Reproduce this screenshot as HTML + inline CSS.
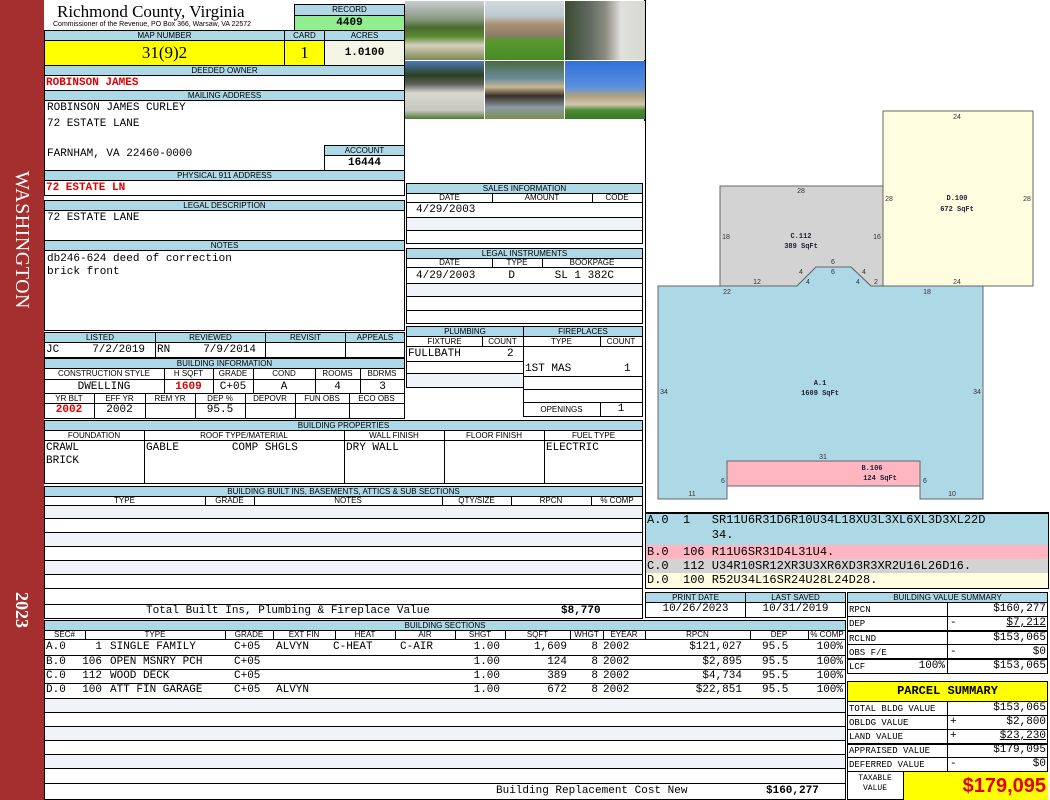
<!DOCTYPE html>
<html><head><meta charset="utf-8"><style>
*{margin:0;padding:0;box-sizing:border-box}
body{width:1050px;height:800px;position:relative;background:#fff;overflow:hidden;font-family:"Liberation Mono",monospace;color:#000}
div{position:absolute}
.h{background:#add8e6;border:1px solid #000;font:8px/9px "Liberation Sans",sans-serif;text-align:center;white-space:nowrap;overflow:hidden}
.s{font:8px/9px "Liberation Sans",sans-serif;text-align:center;border-right:1px solid #000;border-bottom:1px solid #000;white-space:nowrap;overflow:hidden}
.m{font:11px/13px "Liberation Mono",monospace;white-space:pre}
.bx{border:1px solid #000}
.l{border-top:1px solid #000;height:0}
.v{border-left:1px solid #000;width:0}
.r{text-align:right}
.red{color:#e00000;font-weight:bold}
.alt{background:#f0f4f8}
.row div{font:11px/13px "Liberation Mono",monospace;white-space:pre;top:0}
.row div.rr{text-align:right}
</style></head><body>
<!-- sidebar -->
<div style="left:0;top:0;width:44px;height:800px;background:#a52e2e"></div>
<div style="left:22px;top:240px;width:0;height:0"><div style="left:-90px;top:-12px;width:180px;height:24px;transform:rotate(90deg);color:#fff;font:20px/24px 'Liberation Serif',serif;text-align:center;letter-spacing:0.5px">WASHINGTON</div></div>
<div style="left:22px;top:610px;width:0;height:0"><div style="left:-30px;top:-12px;width:60px;height:24px;transform:rotate(90deg);color:#fff;font:bold 18px/24px 'Liberation Serif',serif;text-align:center">2023</div></div>

<!-- header -->
<div style="left:57px;top:2px;font:17px/20px 'Liberation Serif',serif">Richmond County, Virginia</div>
<div style="left:53px;top:21px;font:7px/8px 'Liberation Sans',sans-serif">Commissioner of the Revenue, PO Box 366, Warsaw, VA 22572</div>
<div class="h" style="left:294px;top:4px;width:111px;height:12px">RECORD</div>
<div class="bx m" style="left:294px;top:15px;width:111px;height:16px;background:#90ee90;text-align:center;font-weight:bold;line-height:14px">4409</div>
<div class="h" style="left:44px;top:30px;width:241px;height:11px">MAP NUMBER</div>
<div class="h" style="left:284px;top:30px;width:41px;height:11px">CARD</div>
<div class="h" style="left:324px;top:30px;width:81px;height:11px">ACRES</div>
<div class="bx" style="left:44px;top:40px;width:241px;height:26px;background:#ffff00;font:17px/24px 'Liberation Serif',serif;text-align:center">31(9)2</div>
<div class="bx" style="left:284px;top:40px;width:41px;height:26px;background:#ffff00;font:17px/24px 'Liberation Serif',serif;text-align:center">1</div>
<div class="bx m" style="left:324px;top:40px;width:81px;height:26px;background:#f5f5e6;text-align:center;font-weight:bold;line-height:24px">1.0100</div>
<div class="h" style="left:44px;top:65px;width:361px;height:11px">DEEDED OWNER</div>
<div class="m red" style="left:46px;top:77px">ROBINSON JAMES</div>
<div class="h" style="left:44px;top:90px;width:361px;height:11px">MAILING ADDRESS</div>
<div class="m" style="left:47px;top:102px">ROBINSON JAMES CURLEY</div>
<div class="m" style="left:47px;top:118px">72 ESTATE LANE</div>
<div class="m" style="left:47px;top:148px">FARNHAM, VA 22460-0000</div>
<div class="h" style="left:324px;top:145px;width:81px;height:11px">ACCOUNT</div>
<div class="bx m" style="left:324px;top:155px;width:81px;height:16px;text-align:center;font-weight:bold;line-height:14px">16444</div>
<div class="h" style="left:44px;top:170px;width:361px;height:11px">PHYSICAL 911 ADDRESS</div>
<div class="m red" style="left:46px;top:182px">72 ESTATE LN</div>
<div style="left:44px;top:65px;width:361px;height:131px;border-left:1px solid #000;border-right:1px solid #000;border-bottom:1px solid #000"></div>
<div class="bx" style="left:44px;top:200px;width:361px;height:41px"></div>
<div class="h" style="left:44px;top:200px;width:361px;height:11px">LEGAL DESCRIPTION</div>
<div class="m" style="left:47px;top:212px">72 ESTATE LANE</div>
<div class="bx" style="left:44px;top:240px;width:361px;height:91px"></div>
<div class="h" style="left:44px;top:240px;width:361px;height:11px">NOTES</div>
<div class="m" style="left:47px;top:253px">db246-624 deed of correction
brick front</div>

<!-- listed -->
<div class="bx" style="left:44px;top:332px;width:361px;height:26px"></div>
<div class="h" style="left:44px;top:332px;width:112px;height:11px">LISTED</div>
<div class="h" style="left:155px;top:332px;width:111px;height:11px">REVIEWED</div>
<div class="h" style="left:265px;top:332px;width:81px;height:11px">REVISIT</div>
<div class="h" style="left:345px;top:332px;width:60px;height:11px">APPEALS</div>
<div class="v" style="left:155px;top:342px;height:15px"></div><div class="v" style="left:265px;top:342px;height:15px"></div><div class="v" style="left:345px;top:342px;height:15px"></div>
<div class="m" style="left:46px;top:344px">JC     7/2/2019</div>
<div class="m" style="left:157px;top:344px">RN     7/9/2014</div>

<!-- building info -->
<div class="bx" style="left:44px;top:358px;width:361px;height:61px"></div>
<div class="h" style="left:44px;top:358px;width:361px;height:11px">BUILDING INFORMATION</div>
<div class="s" style="left:44px;top:369px;width:121px;height:11px">CONSTRUCTION STYLE</div>
<div class="s" style="left:164px;top:369px;width:50px;height:11px">H SQFT</div>
<div class="s" style="left:213px;top:369px;width:41px;height:11px">GRADE</div>
<div class="s" style="left:253px;top:369px;width:63px;height:11px">COND</div>
<div class="s" style="left:315px;top:369px;width:46px;height:11px">ROOMS</div>
<div class="s" style="left:360px;top:369px;width:45px;height:11px">BDRMS</div>
<div class="v" style="left:164px;top:380px;height:13px"></div><div class="v" style="left:213px;top:380px;height:13px"></div><div class="v" style="left:253px;top:380px;height:13px"></div><div class="v" style="left:315px;top:380px;height:13px"></div><div class="v" style="left:360px;top:380px;height:13px"></div>
<div class="l" style="left:44px;top:393px;width:361px"></div>
<div class="m" style="left:44px;top:381px;width:120px;text-align:center">DWELLING</div>
<div class="m red" style="left:164px;top:381px;width:49px;text-align:center">1609</div>
<div class="m" style="left:213px;top:381px;width:40px;text-align:center">C+05</div>
<div class="m" style="left:253px;top:381px;width:62px;text-align:center">A</div>
<div class="m" style="left:315px;top:381px;width:45px;text-align:center">4</div>
<div class="m" style="left:360px;top:381px;width:45px;text-align:center">3</div>
<div class="s" style="left:44px;top:394px;width:51px;height:10px;line-height:9px">YR BLT</div>
<div class="s" style="left:94px;top:394px;width:52px;height:10px">EFF YR</div>
<div class="s" style="left:145px;top:394px;width:51px;height:10px">REM YR</div>
<div class="s" style="left:195px;top:394px;width:51px;height:10px">DEP %</div>
<div class="s" style="left:245px;top:394px;width:51px;height:10px">DEPOVR</div>
<div class="s" style="left:295px;top:394px;width:55px;height:10px">FUN OBS</div>
<div class="s" style="left:349px;top:394px;width:56px;height:10px">ECO OBS</div>
<div class="v" style="left:94px;top:404px;height:14px"></div><div class="v" style="left:145px;top:404px;height:14px"></div><div class="v" style="left:195px;top:404px;height:14px"></div><div class="v" style="left:245px;top:404px;height:14px"></div><div class="v" style="left:295px;top:404px;height:14px"></div><div class="v" style="left:349px;top:404px;height:14px"></div>
<div class="m red" style="left:44px;top:404px;width:50px;text-align:center">2002</div>
<div class="m" style="left:94px;top:404px;width:51px;text-align:center">2002</div>
<div class="m" style="left:195px;top:404px;width:50px;text-align:center">95.5</div>

<!-- photos -->
<div style="left:405px;top:0;width:240px;height:121px;border-right:1px solid #000">
<div style="left:0;top:1px;width:79px;height:59px;background:linear-gradient(#c8ccd2 0,#8a9a80 30%,#4a6a30 45%,#5a8a30 60%,#d8d0c0 75%,#7a8a50 100%)"></div>
<div style="left:80px;top:1px;width:79px;height:59px;background:linear-gradient(#d0d8e0 0,#c0c8d0 25%,#a89070 40%,#8a7a68 60%,#5a9a30 65%,#4a8a28 100%)"></div>
<div style="left:160px;top:1px;width:80px;height:59px;background:linear-gradient(90deg,#3a4a30 0,#606a60 30%,#8a8a80 50%,#e0e0dc 70%,#d8d8d0 100%)"></div>
<div style="left:0;top:61px;width:79px;height:58px;background:linear-gradient(#4a7ab8 0,#2a4020 25%,#606060 40%,#d8d8d0 55%,#c8c8c0 85%,#4a7a30 100%)"></div>
<div style="left:80px;top:61px;width:79px;height:58px;background:linear-gradient(#4a6a40 0,#6a8a9a 30%,#c8b890 45%,#3a3028 60%,#8a9aa0 80%,#7a9050 100%)"></div>
<div style="left:160px;top:61px;width:80px;height:58px;background:linear-gradient(#3070d8 0,#5a90e0 45%,#b0a080 60%,#d0c8b0 75%,#4a8a30 85%,#3a7a28 100%)"></div>
</div>

<!-- sales -->
<div class="bx" style="left:406px;top:183px;width:237px;height:61px"></div>
<div class="h" style="left:406px;top:183px;width:237px;height:11px">SALES INFORMATION</div>
<div class="s" style="left:406px;top:193px;width:87px;height:10px;border-left:1px solid #000">DATE</div>
<div class="s" style="left:492px;top:193px;width:101px;height:10px">AMOUNT</div>
<div class="s" style="left:592px;top:193px;width:51px;height:10px">CODE</div>
<div class="m" style="left:416px;top:204px">4/29/2003</div>
<div class="l" style="left:406px;top:217px;width:237px"></div>
<div class="alt" style="left:407px;top:218px;width:235px;height:12px"></div>
<div class="l" style="left:406px;top:230px;width:237px"></div>
<div class="bx" style="left:406px;top:248px;width:237px;height:76px"></div>
<div class="h" style="left:406px;top:248px;width:237px;height:11px">LEGAL INSTRUMENTS</div>
<div class="s" style="left:406px;top:258px;width:87px;height:10px;border-left:1px solid #000">DATE</div>
<div class="s" style="left:492px;top:258px;width:51px;height:10px">TYPE</div>
<div class="s" style="left:542px;top:258px;width:101px;height:10px">BOOKPAGE</div>
<div class="m" style="left:416px;top:270px">4/29/2003     D      SL 1 382C</div>
<div class="l" style="left:406px;top:283px;width:237px"></div>
<div class="alt" style="left:407px;top:284px;width:235px;height:12px"></div>
<div class="l" style="left:406px;top:296px;width:237px"></div>
<div class="l" style="left:406px;top:310px;width:237px"></div>

<!-- plumbing -->
<div class="h" style="left:406px;top:326px;width:118px;height:11px">PLUMBING</div>
<div class="h" style="left:523px;top:326px;width:120px;height:11px">FIREPLACES</div>
<div class="s" style="left:406px;top:337px;width:77px;height:10px;border-left:1px solid #000">FIXTURE</div>
<div class="s" style="left:482px;top:337px;width:42px;height:10px">COUNT</div>
<div class="s" style="left:523px;top:337px;width:78px;height:10px">TYPE</div>
<div class="s" style="left:600px;top:337px;width:43px;height:10px">COUNT</div>
<div class="m" style="left:408px;top:348px">FULLBATH       2</div>
<div class="v" style="left:523px;top:347px;height:70px"></div><div class="v" style="left:642px;top:347px;height:70px"></div><div class="v" style="left:406px;top:347px;height:40px"></div>
<div class="l" style="left:406px;top:361px;width:118px"></div>
<div class="m" style="left:525px;top:363px">1ST MAS        1</div>
<div class="l" style="left:523px;top:376px;width:120px"></div>
<div class="l" style="left:406px;top:373px;width:118px"></div>
<div class="alt" style="left:407px;top:374px;width:116px;height:13px"></div>
<div class="l" style="left:406px;top:387px;width:118px"></div>
<div class="l" style="left:523px;top:389px;width:120px"></div>
<div class="l" style="left:523px;top:402px;width:120px"></div>
<div class="l" style="left:523px;top:416px;width:120px"></div>
<div class="v" style="left:600px;top:402px;height:14px"></div>
<div style="left:523px;top:405px;width:77px;font:8px/9px 'Liberation Sans',sans-serif;text-align:center">OPENINGS</div>
<div class="m" style="left:600px;top:403px;width:42px;text-align:center">1</div>

<!-- building properties -->
<div class="bx" style="left:44px;top:420px;width:599px;height:64px"></div>
<div class="h" style="left:44px;top:420px;width:599px;height:11px">BUILDING PROPERTIES</div>
<div class="s" style="left:44px;top:431px;width:101px;height:10px">FOUNDATION</div>
<div class="s" style="left:144px;top:431px;width:201px;height:10px">ROOF TYPE/MATERIAL</div>
<div class="s" style="left:344px;top:431px;width:101px;height:10px">WALL FINISH</div>
<div class="s" style="left:444px;top:431px;width:101px;height:10px">FLOOR FINISH</div>
<div class="s" style="left:544px;top:431px;width:99px;height:10px;border-right:0">FUEL TYPE</div>
<div class="v" style="left:144px;top:441px;height:42px"></div><div class="v" style="left:344px;top:441px;height:42px"></div><div class="v" style="left:444px;top:441px;height:42px"></div><div class="v" style="left:544px;top:441px;height:42px"></div>
<div class="m" style="left:46px;top:442px">CRAWL
BRICK</div>
<div class="m" style="left:146px;top:442px">GABLE        COMP SHGLS</div>
<div class="m" style="left:346px;top:442px">DRY WALL</div>
<div class="m" style="left:546px;top:442px">ELECTRIC</div>

<!-- built ins -->
<div class="bx" style="left:44px;top:486px;width:599px;height:133px"></div>
<div class="h" style="left:44px;top:486px;width:599px;height:11px">BUILDING BUILT INS, BASEMENTS, ATTICS &amp; SUB SECTIONS</div>
<div class="s" style="left:44px;top:496px;width:162px;height:10px">TYPE</div>
<div class="s" style="left:205px;top:496px;width:50px;height:10px">GRADE</div>
<div class="s" style="left:254px;top:496px;width:189px;height:10px">NOTES</div>
<div class="s" style="left:442px;top:496px;width:70px;height:10px">QTY/SIZE</div>
<div class="s" style="left:511px;top:496px;width:81px;height:10px">RPCN</div>
<div class="s" style="left:591px;top:496px;width:52px;height:10px;border-right:0">% COMP</div>
<div class="alt" style="left:45px;top:506px;width:597px;height:12px"></div>
<div class="l" style="left:44px;top:518px;width:599px"></div>
<div class="l" style="left:44px;top:532px;width:599px"></div>
<div class="alt" style="left:45px;top:533px;width:597px;height:13px"></div>
<div class="l" style="left:44px;top:546px;width:599px"></div>
<div class="l" style="left:44px;top:560px;width:599px"></div>
<div class="alt" style="left:45px;top:561px;width:597px;height:13px"></div>
<div class="l" style="left:44px;top:574px;width:599px"></div>
<div class="l" style="left:44px;top:588px;width:599px"></div>
<div class="l" style="left:44px;top:604px;width:599px"></div>
<div class="m" style="left:146px;top:605px">Total Built Ins, Plumbing &amp; Fireplace Value</div>
<div class="m" style="left:561px;top:605px;font-weight:bold">$8,770</div>

<!-- building sections -->
<div class="bx" style="left:44px;top:620px;width:802px;height:180px"></div>
<div class="h" style="left:44px;top:620px;width:802px;height:11px">BUILDING SECTIONS</div>
<div class="s" style="left:44px;top:630px;width:42px;height:10px">SEC#</div>
<div class="s" style="left:85px;top:630px;width:141px;height:10px">TYPE</div>
<div class="s" style="left:225px;top:630px;width:49px;height:10px">GRADE</div>
<div class="s" style="left:273px;top:630px;width:63px;height:10px">EXT FIN</div>
<div class="s" style="left:335px;top:630px;width:61px;height:10px">HEAT</div>
<div class="s" style="left:395px;top:630px;width:61px;height:10px">AIR</div>
<div class="s" style="left:455px;top:630px;width:51px;height:10px">SHGT</div>
<div class="s" style="left:505px;top:630px;width:66px;height:10px">SQFT</div>
<div class="s" style="left:570px;top:630px;width:34px;height:10px">WHGT</div>
<div class="s" style="left:603px;top:630px;width:43px;height:10px">EYEAR</div>
<div class="s" style="left:645px;top:630px;width:106px;height:10px">RPCN</div>
<div class="s" style="left:750px;top:630px;width:59px;height:10px">DEP</div>
<div class="s" style="left:808px;top:630px;width:38px;height:10px;border-right:0">% COMP</div>

<div class="row" style="left:0;top:641px;width:1050px;height:13px">
<div style="left:46px">A.0</div><div class="rr" style="left:70px;width:32px">1</div><div style="left:110px">SINGLE FAMILY</div><div style="left:234px">C+05</div><div style="left:276px">ALVYN</div><div style="left:333px">C-HEAT</div><div style="left:400px">C-AIR</div><div class="rr" style="left:440px;width:60px">1.00</div><div class="rr" style="left:500px;width:67px">1,609</div><div class="rr" style="left:570px;width:28px">8</div><div style="left:603px">2002</div><div class="rr" style="left:650px;width:92px">$121,027</div><div style="left:762px">95.5</div><div class="rr" style="left:800px;width:43px">100%</div>
</div>
<div class="row" style="left:0;top:656px;width:1050px;height:13px">
<div style="left:46px">B.0</div><div class="rr" style="left:70px;width:32px">106</div><div style="left:110px">OPEN MSNRY PCH</div><div style="left:234px">C+05</div><div class="rr" style="left:440px;width:60px">1.00</div><div class="rr" style="left:500px;width:67px">124</div><div class="rr" style="left:570px;width:28px">8</div><div style="left:603px">2002</div><div class="rr" style="left:650px;width:92px">$2,895</div><div style="left:762px">95.5</div><div class="rr" style="left:800px;width:43px">100%</div>
</div>
<div class="row" style="left:0;top:670px;width:1050px;height:13px">
<div style="left:46px">C.0</div><div class="rr" style="left:70px;width:32px">112</div><div style="left:110px">WOOD DECK</div><div style="left:234px">C+05</div><div class="rr" style="left:440px;width:60px">1.00</div><div class="rr" style="left:500px;width:67px">389</div><div class="rr" style="left:570px;width:28px">8</div><div style="left:603px">2002</div><div class="rr" style="left:650px;width:92px">$4,734</div><div style="left:762px">95.5</div><div class="rr" style="left:800px;width:43px">100%</div>
</div>
<div class="row" style="left:0;top:684px;width:1050px;height:13px">
<div style="left:46px">D.0</div><div class="rr" style="left:70px;width:32px">100</div><div style="left:110px">ATT FIN GARAGE</div><div style="left:234px">C+05</div><div style="left:276px">ALVYN</div><div class="rr" style="left:440px;width:60px">1.00</div><div class="rr" style="left:500px;width:67px">672</div><div class="rr" style="left:570px;width:28px">8</div><div style="left:603px">2002</div><div class="rr" style="left:650px;width:92px">$22,851</div><div style="left:762px">95.5</div><div class="rr" style="left:800px;width:43px">100%</div>
</div>
<div class="l" style="left:44px;top:655px;width:802px"></div>
<div class="l" style="left:44px;top:669px;width:802px"></div>
<div class="l" style="left:44px;top:683px;width:802px"></div>
<div class="l" style="left:44px;top:698px;width:802px"></div>
<div class="alt" style="left:45px;top:699px;width:800px;height:13px"></div>
<div class="l" style="left:44px;top:712px;width:802px"></div>
<div class="l" style="left:44px;top:726px;width:802px"></div>
<div class="alt" style="left:45px;top:727px;width:800px;height:13px"></div>
<div class="l" style="left:44px;top:740px;width:802px"></div>
<div class="l" style="left:44px;top:754px;width:802px"></div>
<div class="alt" style="left:45px;top:755px;width:800px;height:13px"></div>
<div class="l" style="left:44px;top:768px;width:802px"></div>
<div class="l" style="left:44px;top:783px;width:802px"></div>
<div class="m" style="left:496px;top:785px">Building Replacement Cost New</div>
<div class="m" style="left:766px;top:785px;font-weight:bold">$160,277</div>

<!-- sketch -->
<div style="left:645px;top:0;width:404px;height:513px;border-left:1px solid #000;border-bottom:1px solid #000"></div>
<svg style="position:absolute;left:0;top:0" width="1050" height="512" font-family="Liberation Sans,sans-serif" font-size="7">
<polygon points="720,186 883,186 883,286 871,286 851,267 816,267 797,286 720,286" fill="#d3d3d3" stroke="#666" stroke-width="1"/>
<polygon points="883,111 1033,111 1033,286 883,286" fill="#fffde0" stroke="#666"/>
<polygon points="658,286 797,286 816,267 851,267 871,286 983,286 983,499 920,499 920,461 727,461 727,499 658,499" fill="#add8e6" stroke="#666"/>
<rect x="727" y="461" width="193" height="25" fill="#ffb6c1" stroke="#666"/>
<g fill="#333" text-anchor="middle">
<text x="957" y="119">24</text><text x="889" y="201">28</text><text x="1027" y="201">28</text><text x="957" y="284">24</text>
<text x="801" y="193">28</text><text x="726" y="239">18</text><text x="877" y="239">16</text>
<text x="757" y="284">12</text><text x="801" y="274">4</text><text x="833" y="264">6</text><text x="833" y="274">6</text><text x="864" y="274">4</text><text x="858" y="284">4</text><text x="808" y="284">4</text><text x="876" y="284">2</text>
<text x="727" y="294">22</text><text x="927" y="294">18</text>
<text x="664" y="394">34</text><text x="977" y="394">34</text>
<text x="823" y="459">31</text><text x="723" y="483">6</text><text x="925" y="483">6</text><text x="692" y="496">11</text><text x="952" y="496">10</text>
</g>
<g font-family="Liberation Mono,monospace" font-size="7" font-weight="bold" fill="#223" text-anchor="middle">
<text x="957" y="200">D.100</text><text x="957" y="211">672 SqFt</text>
<text x="801" y="238">C.112</text><text x="801" y="248">389 SqFt</text>
<text x="820" y="385">A.1</text><text x="820" y="395">1609 SqFt</text>
<text x="872" y="470">B.106</text><text x="880" y="480">124 SqFt</text>
</g>
</svg>
<div class="m" style="left:645px;top:513px;width:404px;height:32px;background:#add8e6;font-size:12px;line-height:15px;padding-left:2px">A.0  1   SR11U6R31D6R10U34L18XU3L3XL6XL3D3XL22D
         34.</div>
<div class="m" style="left:645px;top:545px;width:404px;height:14px;background:#ffb6c1;font-size:12px;line-height:14px;padding-left:2px">B.0  106 R11U6SR31D4L31U4.</div>
<div class="m" style="left:645px;top:559px;width:404px;height:14px;background:#d3d3d3;font-size:12px;line-height:14px;padding-left:2px">C.0  112 U34R10SR12XR3U3XR6XD3R3XR2U16L26D16.</div>
<div class="m" style="left:645px;top:573px;width:404px;height:15px;background:#fffde0;font-size:12px;line-height:14px;padding-left:2px">D.0  100 R52U34L16SR24U28L24D28.</div>
<div style="left:645px;top:513px;width:404px;height:76px;border:1px solid #000"></div>

<!-- print date -->
<div class="h" style="left:645px;top:592px;width:101px;height:11px">PRINT DATE</div>
<div class="h" style="left:745px;top:592px;width:101px;height:11px">LAST SAVED</div>
<div class="bx m" style="left:645px;top:602px;width:101px;height:16px;text-align:center">10/26/2023</div>
<div class="bx m" style="left:745px;top:602px;width:101px;height:16px;text-align:center">10/31/2019</div>

<!-- building value summary -->
<div class="h" style="left:847px;top:592px;width:201px;height:11px">BUILDING VALUE SUMMARY</div>
<div class="bx" style="left:847px;top:602px;width:201px;height:72px"></div>
<div class="v" style="left:947px;top:602px;height:72px"></div>
<div class="l" style="left:847px;top:616px;width:201px"></div>
<div class="l" style="left:847px;top:630px;width:201px;border-top-width:2px"></div>
<div class="l" style="left:847px;top:644px;width:201px"></div>
<div class="l" style="left:847px;top:658px;width:201px;border-top-width:2px"></div>
<div class="m" style="left:849px;top:604px;font-size:9px">RPCN</div><div class="m r" style="left:950px;top:603px;width:96px">$160,277</div>
<div class="m" style="left:849px;top:618px;font-size:9px">DEP</div><div class="m" style="left:950px;top:617px;width:96px">- <span style="position:absolute;right:0;text-decoration:underline">$7,212</span></div>
<div class="m" style="left:849px;top:633px;font-size:9px">RCLND</div><div class="m r" style="left:950px;top:632px;width:96px">$153,065</div>
<div class="m" style="left:849px;top:647px;font-size:9px">OBS F/E</div><div class="m" style="left:950px;top:646px;width:96px">- <span style="position:absolute;right:0">$0</span></div>
<div class="m" style="left:849px;top:661px;font-size:9px">LCF</div><div class="m r" style="left:890px;top:660px;width:55px">100%</div><div class="m r" style="left:950px;top:660px;width:96px">$153,065</div>

<!-- parcel summary -->
<div class="bx" style="left:847px;top:681px;width:201px;height:21px;background:#ffff00;font:bold 12px/19px 'Liberation Mono',monospace;text-align:center">PARCEL  SUMMARY</div>
<div class="bx" style="left:847px;top:701px;width:201px;height:99px"></div>
<div class="v" style="left:947px;top:701px;height:70px"></div>
<div class="l" style="left:847px;top:715px;width:201px"></div>
<div class="l" style="left:847px;top:729px;width:201px"></div>
<div class="l" style="left:847px;top:743px;width:201px;border-top-width:2px"></div>
<div class="l" style="left:847px;top:757px;width:201px"></div>
<div class="l" style="left:847px;top:771px;width:201px"></div>
<div class="m" style="left:849px;top:703px;font-size:9px">TOTAL BLDG VALUE</div><div class="m r" style="left:950px;top:702px;width:96px">$153,065</div>
<div class="m" style="left:849px;top:717px;font-size:9px">OBLDG VALUE</div><div class="m" style="left:950px;top:716px;width:96px">+ <span style="position:absolute;right:0">$2,800</span></div>
<div class="m" style="left:849px;top:731px;font-size:9px">LAND VALUE</div><div class="m" style="left:950px;top:730px;width:96px">+ <span style="position:absolute;right:0;text-decoration:underline">$23,230</span></div>
<div class="m" style="left:849px;top:745px;font-size:9px">APPRAISED VALUE</div><div class="m r" style="left:950px;top:744px;width:96px">$179,095</div>
<div class="m" style="left:849px;top:759px;font-size:9px">DEFERRED VALUE</div><div class="m" style="left:950px;top:758px;width:96px">- <span style="position:absolute;right:0">$0</span></div>
<div class="m" style="left:849px;top:774px;width:52px;font-size:8px;line-height:10px;text-align:center">TAXABLE
VALUE</div>
<div style="left:903px;top:772px;width:145px;height:28px;background:#ffff00;border-left:1px solid #000;color:#e00000;font:bold 20px/28px 'Liberation Sans',sans-serif;text-align:right;padding-right:2px">$179,095</div>
</body></html>
